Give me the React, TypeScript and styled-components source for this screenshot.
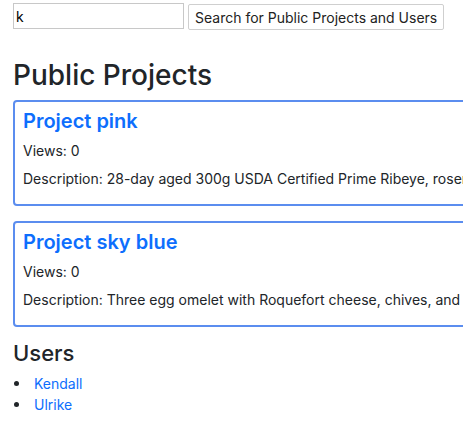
import React from "react";
import styled, { createGlobalStyle } from "styled-components";

const Global = createGlobalStyle`
  html, body {
    margin: 0;
    padding: 0;
    overflow: hidden;
    background: #fff;
  }
  body {
    font-family: Inter, "Liberation Sans", Arial, sans-serif;
    color: #212529;
    font-size: 14px;
    line-height: 1.5;
  }
`;

const Page = styled.div`
  padding: 3px 13px 0;
`;

const SearchForm = styled.form`
  display: flex;
  align-items: flex-start;
  gap: 4px;
`;

const SearchInput = styled.input`
  box-sizing: border-box;
  width: 171px;
  height: 26px;
  padding: 1px 2px;
  border: 1px solid #c8c8c8;
  border-radius: 0;
  font: 14px Inter, "Liberation Sans", Arial, sans-serif;
  color: #000;
  outline: none;
`;

const SearchButton = styled.button`
  box-sizing: border-box;
  margin-top: 1px;
  height: 26px;
  padding: 0 6px;
  background: #fff;
  border: 1px solid #cfcfcf;
  border-radius: 2px;
  font: 14px Inter, "Liberation Sans", Arial, sans-serif;
  color: #222;
  white-space: nowrap;
`;

const PageTitle = styled.h2`
  margin: 29px 0 7px;
  font-size: 28px;
  font-weight: 500;
  line-height: 1.2;
`;

const Card = styled.div`
  box-sizing: border-box;
  width: max-content;
  min-width: 100%;
  padding: 7px 8px;
  border: 2px solid #5b8def;
  border-radius: 4px;
  margin-bottom: 15px;
  white-space: nowrap;
`;

const CardTitle = styled.a`
  display: block;
  margin: 0 0 7px;
  font-size: 20px;
  font-weight: 600;
  line-height: 1.2;
  color: #0d6efd;
  text-decoration: none;
`;

const CardText = styled.p`
  margin: 0 0 7px;
  &:last-child {
    margin-bottom: 8px;
  }
`;

const SectionTitle = styled.h3`
  margin: -2px 0 7px;
  font-size: 22px;
  font-weight: 500;
  line-height: 1.2;
`;

const UserList = styled.ul`
  list-style: none;
  margin: 0;
  padding: 0;
`;

const UserItem = styled.li`
  display: flex;
  align-items: center;
  &::before {
    content: "";
    width: 5px;
    height: 5px;
    border-radius: 50%;
    background: #212529;
    margin: 0 15px 0 1px;
  }
`;

const UserLink = styled.a`
  color: #0d6efd;
  text-decoration: none;
`;

const projects = [
  {
    name: "Project pink",
    views: 0,
    description:
      "28-day aged 300g USDA Certified Prime Ribeye, rosemary-thyme garlic butter, with choice of two sides.",
  },
  {
    name: "Project sky blue",
    views: 0,
    description:
      "Three egg omelet with Roquefort cheese, chives, and ham. With a side of roasted potatoes, and your choice of toast or croissant.",
  },
];

const users = ["Kendall", "Ulrike"];

export default function App() {
  return (
    <>
      <Global />
      <Page>
        <SearchForm onSubmit={(e) => e.preventDefault()}>
          <SearchInput defaultValue="k" />
          <SearchButton type="submit">Search for Public Projects and Users</SearchButton>
        </SearchForm>
        <PageTitle>Public Projects</PageTitle>
        {projects.map((p) => (
          <Card key={p.name}>
            <CardTitle href="#">{p.name}</CardTitle>
            <CardText>Views: {p.views}</CardText>
            <CardText>Description: {p.description}</CardText>
          </Card>
        ))}
        <SectionTitle>Users</SectionTitle>
        <UserList>
          {users.map((u) => (
            <UserItem key={u}>
              <UserLink href="#">{u}</UserLink>
            </UserItem>
          ))}
        </UserList>
      </Page>
    </>
  );
}
